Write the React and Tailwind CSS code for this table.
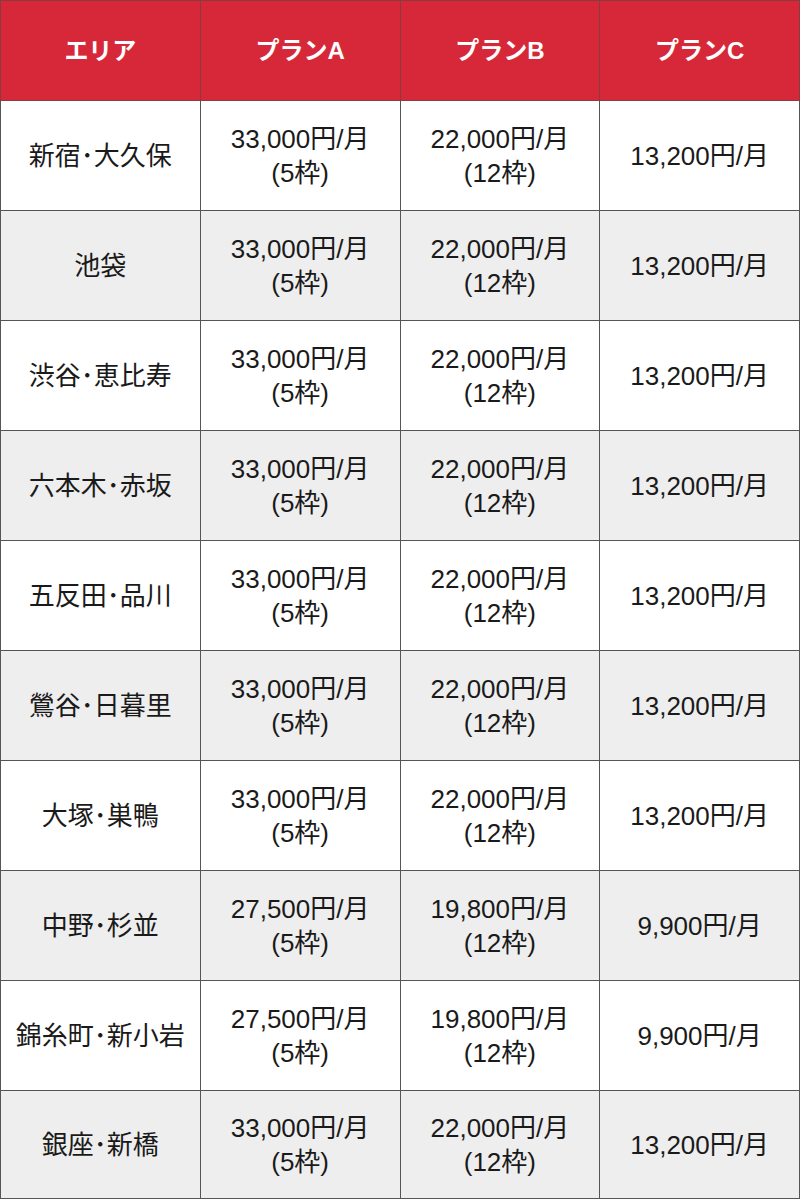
const rows = [
  ['新宿･大久保', '33,000円/月', '(5枠)', '22,000円/月', '(12枠)', '13,200円/月'],
  ['池袋', '33,000円/月', '(5枠)', '22,000円/月', '(12枠)', '13,200円/月'],
  ['渋谷･恵比寿', '33,000円/月', '(5枠)', '22,000円/月', '(12枠)', '13,200円/月'],
  ['六本木･赤坂', '33,000円/月', '(5枠)', '22,000円/月', '(12枠)', '13,200円/月'],
  ['五反田･品川', '33,000円/月', '(5枠)', '22,000円/月', '(12枠)', '13,200円/月'],
  ['鶯谷･日暮里', '33,000円/月', '(5枠)', '22,000円/月', '(12枠)', '13,200円/月'],
  ['大塚･巣鴨', '33,000円/月', '(5枠)', '22,000円/月', '(12枠)', '13,200円/月'],
  ['中野･杉並', '27,500円/月', '(5枠)', '19,800円/月', '(12枠)', '9,900円/月'],
  ['錦糸町･新小岩', '27,500円/月', '(5枠)', '19,800円/月', '(12枠)', '9,900円/月'],
  ['銀座･新橋', '33,000円/月', '(5枠)', '22,000円/月', '(12枠)', '13,200円/月'],
];

const headers = ['エリア', 'プランA', 'プランB', 'プランC'];

const cell = 'border border-[#555] text-center align-middle text-[26px] text-[#1a1a1a] leading-[34px]';

export default function App() {
  return (
    <div className="w-[800px] bg-white font-['Liberation_Sans','Noto_Sans_CJK_JP',sans-serif]">
      <table className="w-full border-collapse table-fixed">
        <thead>
          <tr className="h-[100px] bg-[#d7283a]">
            {headers.map(h => (
              <th key={h} className="border border-[#8a3a40] text-white text-[24px] font-bold text-center align-middle">
                {h}
              </th>
            ))}
          </tr>
        </thead>
        <tbody>
          {rows.map((r, i) => (
            <tr
              key={r[0]}
              className={`${i === rows.length - 1 ? 'h-[108px]' : 'h-[110px]'} ${i % 2 ? 'bg-[#eeeeee]' : 'bg-white'}`}
            >
              <td className={cell}>{r[0]}</td>
              <td className={cell}>
                {r[1]}<br />{r[2]}
              </td>
              <td className={cell}>
                {r[3]}<br />{r[4]}
              </td>
              <td className={cell}>{r[5]}</td>
            </tr>
          ))}
        </tbody>
      </table>
    </div>
  );
}
